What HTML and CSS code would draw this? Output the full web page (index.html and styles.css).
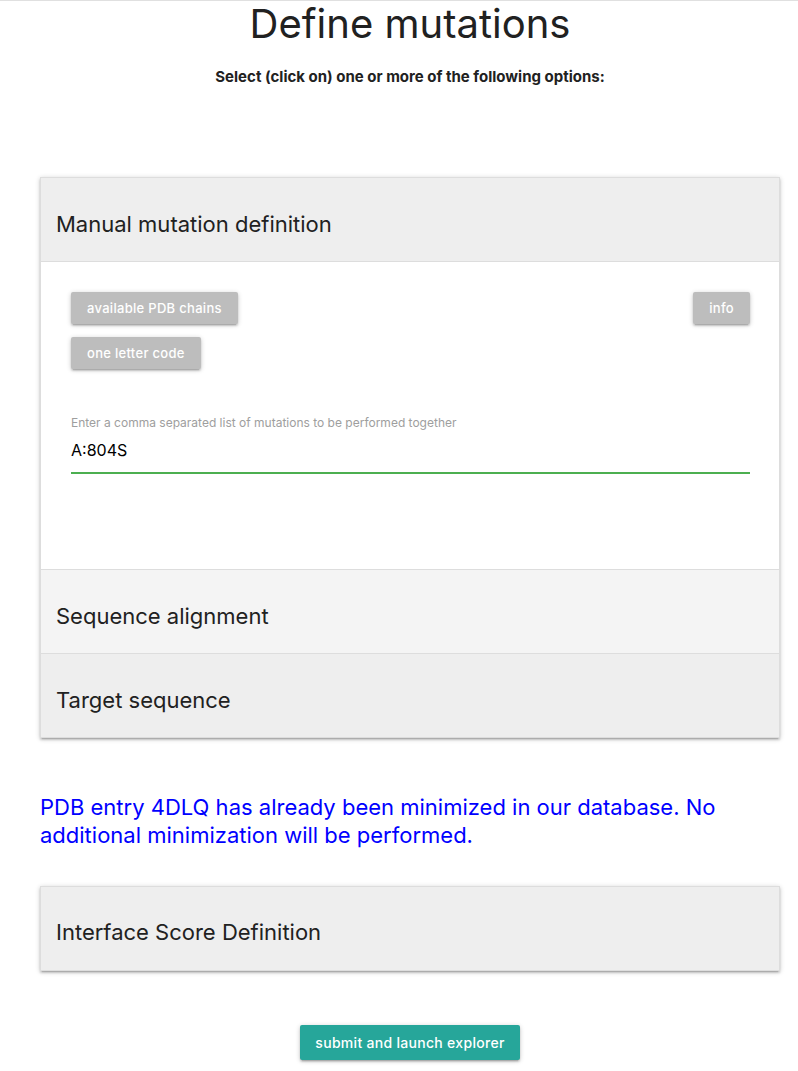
FILE: index.html
```html
<!DOCTYPE html>
<html>
<head>
<meta charset="utf-8">
<link rel="stylesheet" href="styles.css">
</head>
<body>
<div class="page">
  <h1 class="title">Define mutations</h1>
  <p class="subtitle">Select (click on) one or more of the following options:</p>

  <div class="panel panel-main">
    <div class="panel-header">Manual mutation definition</div>
    <div class="panel-body">
      <div class="btn-row">
        <div class="btn-col">
          <button class="btn btn-grey">available PDB chains</button>
          <button class="btn btn-grey">one letter code</button>
        </div>
        <button class="btn btn-grey">info</button>
      </div>
      <div class="field">
        <label class="field-label">Enter a comma separated list of mutations to be performed together</label>
        <div class="field-input">A:804S</div>
      </div>
    </div>
    <div class="panel-header header-light">Sequence alignment</div>
    <div class="panel-header">Target sequence</div>
  </div>

  <p class="notice">PDB entry 4DLQ has already been minimized in our database. No additional minimization will be performed.</p>

  <div class="panel panel-score">
    <div class="panel-header score-header">Interface Score Definition</div>
  </div>

  <div class="submit-row">
    <button class="btn btn-teal">submit and launch explorer</button>
  </div>
</div>
</body>
</html>
```

FILE: styles.css
```css
html, body {
  margin: 0;
  padding: 0;
  background: #fff;
}
body {
  font-family: Inter, "Noto Sans", sans-serif;
  color: #212121;
  border-top: 1px solid #e0e0e0;
}
.page {
  width: 740px;
  margin-left: 40px;
  padding-bottom: 20px;
}
.title {
  margin: 0;
  padding-top: 1px;
  text-align: center;
  font-size: 40px;
  font-weight: 400;
  line-height: 44px;
}
.subtitle {
  margin: 21px 0 0;
  text-align: center;
  font-size: 15px;
  font-weight: 700;
  line-height: 20px;
}
.panel {
  box-shadow: 0 2px 2px 0 rgba(0,0,0,0.14), 0 3px 1px -2px rgba(0,0,0,0.12), 0 1px 5px 0 rgba(0,0,0,0.2);
  border: 1px solid #ddd;
  border-bottom: none;
}
.panel-main {
  margin-top: 90px;
}
.panel-header {
  height: 84px;
  display: flex;
  align-items: center;
  padding-left: 15px;
  padding-top: 8px;
  box-sizing: border-box;
  font-size: 22px;
  background: #eeeeee;
  border-bottom: 1px solid #ddd;
  color: #212121;
}
.header-light {
  background: #f4f4f4;
}
.panel-body {
  background: #fff;
  border-bottom: 1px solid #ddd;
  height: 308px;
  padding: 30px 29px 0 30px;
  box-sizing: border-box;
}
.btn-row {
  display: flex;
  justify-content: space-between;
  align-items: flex-start;
}
.btn-col {
  display: flex;
  flex-direction: column;
  align-items: flex-start;
  gap: 13px;
}
.btn {
  font-family: Inter, "Noto Sans", sans-serif;
  border: none;
  border-radius: 2px;
  color: #fff;
  font-size: 13px;
  font-weight: 500;
  letter-spacing: 0.3px;
  height: 32px;
  padding: 0 16px;
  box-shadow: 0 2px 2px 0 rgba(0,0,0,0.14), 0 3px 1px -2px rgba(0,0,0,0.12), 0 1px 5px 0 rgba(0,0,0,0.2);
}
.btn-grey {
  background: #bdbdbd;
}
.field {
  margin-top: 46px;
}
.field-label {
  display: block;
  font-size: 12px;
  color: #9e9e9e;
  line-height: 16px;
}
.field-input {
  margin-top: 8px;
  font-size: 16px;
  line-height: 22px;
  color: #000;
  padding-bottom: 11px;
  border-bottom: 2px solid #4caf50;
}
.notice {
  margin: 55px 0 0;
  color: #0000ff;
  font-size: 22px;
  line-height: 28px;
}
.panel-score {
  margin-top: 37px;
}
.score-header {
  height: 84px;
  padding-top: 6px;
}
.submit-row {
  display: flex;
  justify-content: center;
  margin-top: 54px;
}
.btn-teal {
  background: #26a69a;
  height: 35px;
  font-size: 14px;
  padding: 0 15px;
}
```
